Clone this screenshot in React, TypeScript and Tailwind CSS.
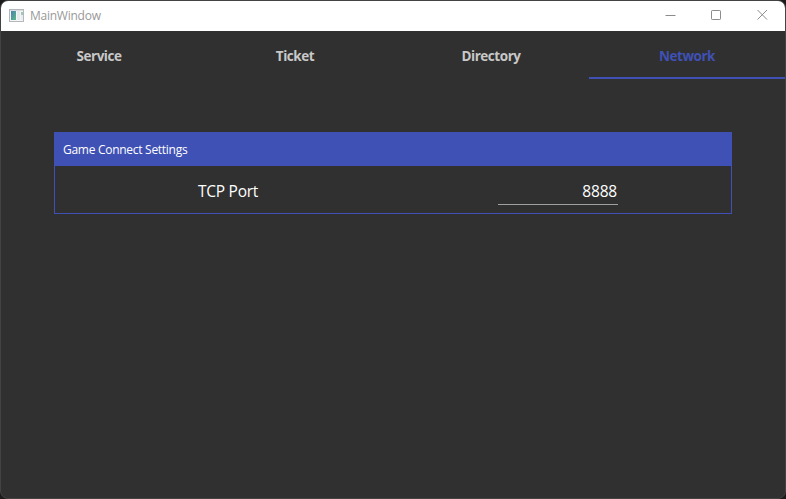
import React from 'react';

const tabs = ['Service', 'Ticket', 'Directory', 'Network'];

function AppIcon() {
  return (
    <svg className="mr-[6px] mb-px h-[13px] w-[15px]" viewBox="0 0 15 13">
      <defs>
        <linearGradient id="pane" x1="0" y1="0" x2="1" y2="1">
          <stop offset="0" stopColor="#4a7fb0" />
          <stop offset="1" stopColor="#5dba86" />
        </linearGradient>
      </defs>
      <rect x="0.5" y="0.5" width="14" height="12" fill="#f4f5f6" stroke="#b4b8bc" />
      <rect x="1" y="1" width="13" height="1" fill="#dadddf" />
      <rect x="2" y="2" width="5" height="9" fill="url(#pane)" />
      <rect x="8" y="2" width="3" height="9" fill="#e6eaed" />
      <rect x="12" y="3" width="2" height="3" fill="#9cc9b4" />
      <rect x="12" y="6" width="2" height="5" fill="#e9ebed" />
    </svg>
  );
}

function TitleBar() {
  return (
    <header className="flex h-[30px] items-center bg-white pl-2 text-[#8c8c8c]">
      <AppIcon />
      <span className="flex-1 text-[12px] leading-[28px] tracking-[-0.25px] text-[#999999]">MainWindow</span>
      <div className="mb-[3px] flex items-center gap-[35px] pr-[17px]">
        <svg className="h-[11px] w-[11px]" viewBox="0 0 11 11" fill="none" stroke="currentColor">
          <path d="M0.5 6.5h10" />
        </svg>
        <svg className="h-[11px] w-[11px]" viewBox="0 0 11 11" fill="none" stroke="currentColor">
          <rect x="0.5" y="1.5" width="9" height="9" rx="0.7" />
        </svg>
        <svg className="h-[11px] w-[11px]" viewBox="0 0 11 11" fill="none" stroke="currentColor">
          <path d="M0.5 1l9.5 9.5M10 1l-9.5 9.5" />
        </svg>
      </div>
    </header>
  );
}

export default function App() {
  return (
    <div className="h-[499px] w-[786px] bg-[#1c1a1c] font-['Open_Sans','Noto_Sans',sans-serif]">
      <div className="flex h-full flex-col overflow-hidden rounded-lg border border-[#434343] bg-[#303030]">
        <TitleBar />
        <nav className="grid h-12 grid-cols-4">
          {tabs.map((label) => (
            <button
              key={label}
              className={`border-b-2 pt-[3px] text-center text-[13.5px] leading-5 font-bold tracking-[-0.45px] ${
                label === 'Network' ? 'border-[#3f51b5] text-[#3f51b5]' : 'border-transparent text-[#c8c8c8]'
              }`}
            >
              {label}
            </button>
          ))}
        </nav>
        <main className="flex-1 px-[53px] pt-[53px]">
          <section className="h-[82px] border border-[#3f51b5]">
            <h2 className="h-[33px] bg-[#3f51b5] pl-2 text-[12px] leading-[34px] tracking-[-0.28px] text-white">
              Game Connect Settings
            </h2>
            <div className="grid h-[47px] grid-cols-[346px_1fr] items-center">
              <label htmlFor="port" className="pt-[4px] text-center text-[15.5px] tracking-[-0.25px] text-white">
                TCP Port
              </label>
              <input
                id="port"
                defaultValue="8888"
                className="mt-1 ml-[97px] h-[26px] w-[120px] border-b border-[#a0a0a0] bg-transparent pr-px pb-[1px] text-right text-[15.5px] tracking-[-0.2px] text-white outline-none"
              />
            </div>
          </section>
        </main>
      </div>
    </div>
  );
}
